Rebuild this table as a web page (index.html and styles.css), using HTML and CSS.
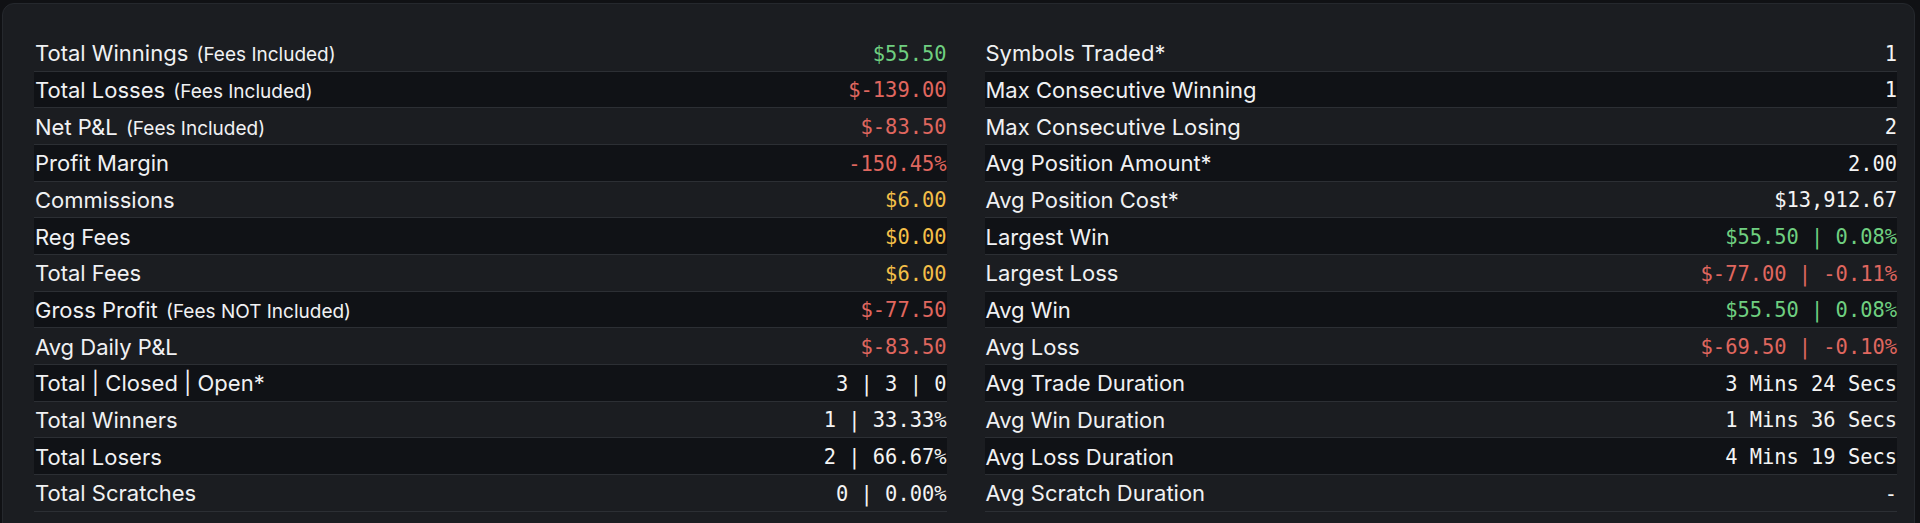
FILE: index.html
```html
<!DOCTYPE html>
<html lang="en">
<head>
<meta charset="utf-8">
<title>Stats</title>
<link rel="stylesheet" href="styles.css">
</head>
<body>
<div class="card">
  <div class="grid">
    <div class="col">
      <div class="row"><span class="label">Total Winnings <small>(Fees Included)</small></span><span class="val pos">$55.50</span></div>
      <div class="row"><span class="label">Total Losses <small>(Fees Included)</small></span><span class="val neg">$-139.00</span></div>
      <div class="row"><span class="label">Net P&amp;L <small>(Fees Included)</small></span><span class="val neg">$-83.50</span></div>
      <div class="row"><span class="label">Profit Margin</span><span class="val neg">-150.45%</span></div>
      <div class="row"><span class="label">Commissions</span><span class="val fee">$6.00</span></div>
      <div class="row"><span class="label">Reg Fees</span><span class="val fee">$0.00</span></div>
      <div class="row"><span class="label">Total Fees</span><span class="val fee">$6.00</span></div>
      <div class="row"><span class="label">Gross Profit <small>(Fees NOT Included)</small></span><span class="val neg">$-77.50</span></div>
      <div class="row"><span class="label">Avg Daily P&amp;L</span><span class="val neg">$-83.50</span></div>
      <div class="row"><span class="label">Total | Closed | Open*</span><span class="val">3 | 3 | 0</span></div>
      <div class="row"><span class="label">Total Winners</span><span class="val">1 | 33.33%</span></div>
      <div class="row"><span class="label">Total Losers</span><span class="val">2 | 66.67%</span></div>
      <div class="row"><span class="label">Total Scratches</span><span class="val">0 | 0.00%</span></div>
    </div>
    <div class="col">
      <div class="row"><span class="label">Symbols Traded*</span><span class="val">1</span></div>
      <div class="row"><span class="label">Max Consecutive Winning</span><span class="val">1</span></div>
      <div class="row"><span class="label">Max Consecutive Losing</span><span class="val">2</span></div>
      <div class="row"><span class="label">Avg Position Amount*</span><span class="val">2.00</span></div>
      <div class="row"><span class="label">Avg Position Cost*</span><span class="val">$13,912.67</span></div>
      <div class="row"><span class="label">Largest Win</span><span class="val pos">$55.50 | 0.08%</span></div>
      <div class="row"><span class="label">Largest Loss</span><span class="val neg">$-77.00 | -0.11%</span></div>
      <div class="row"><span class="label">Avg Win</span><span class="val pos">$55.50 | 0.08%</span></div>
      <div class="row"><span class="label">Avg Loss</span><span class="val neg">$-69.50 | -0.10%</span></div>
      <div class="row"><span class="label">Avg Trade Duration</span><span class="val">3 Mins 24 Secs</span></div>
      <div class="row"><span class="label">Avg Win Duration</span><span class="val">1 Mins 36 Secs</span></div>
      <div class="row"><span class="label">Avg Loss Duration</span><span class="val">4 Mins 19 Secs</span></div>
      <div class="row"><span class="label">Avg Scratch Duration</span><span class="val">-</span></div>
    </div>
  </div>
</div>
</body>
</html>
```

FILE: styles.css
```css
html, body {
  margin: 0;
  padding: 0;
  background: #101114;
  height: 100%;
  overflow: hidden;
}

body {
  padding: 3px 5px 0 2px;
  font-family: Inter, "Noto Sans", sans-serif;
  color: #f0f1f3;
}

.card {
  background: #1b1d21;
  border: 1px solid #25282d;
  border-radius: 12px;
  padding: 31px 17px 40px 31px;
}

.grid {
  display: grid;
  grid-template-columns: 1fr 1fr;
  column-gap: 38px;
}

.col {
  display: flex;
  flex-direction: column;
}

.row {
  box-sizing: border-box;
  height: 36.67px;
  border-bottom: 1px solid #2c2f34;
  display: flex;
  align-items: center;
  justify-content: space-between;
}

.row:nth-child(even) {
  background: #101216;
}

.label {
  font-size: 22px;
  padding-left: 1px;
  padding-top: 1px;
}

.label small {
  font-size: 19px;
  margin-left: 2px;
}

.val {
  font-family: "DejaVu Sans Mono", "Liberation Mono", monospace;
  font-size: 20.4px;
  color: #f4f4f4;
  white-space: pre;
  padding-top: 2px;
}

.pos { color: #6fcf80; }
.neg { color: #e0675f; }
.fee { color: #f4bf48; }
```
